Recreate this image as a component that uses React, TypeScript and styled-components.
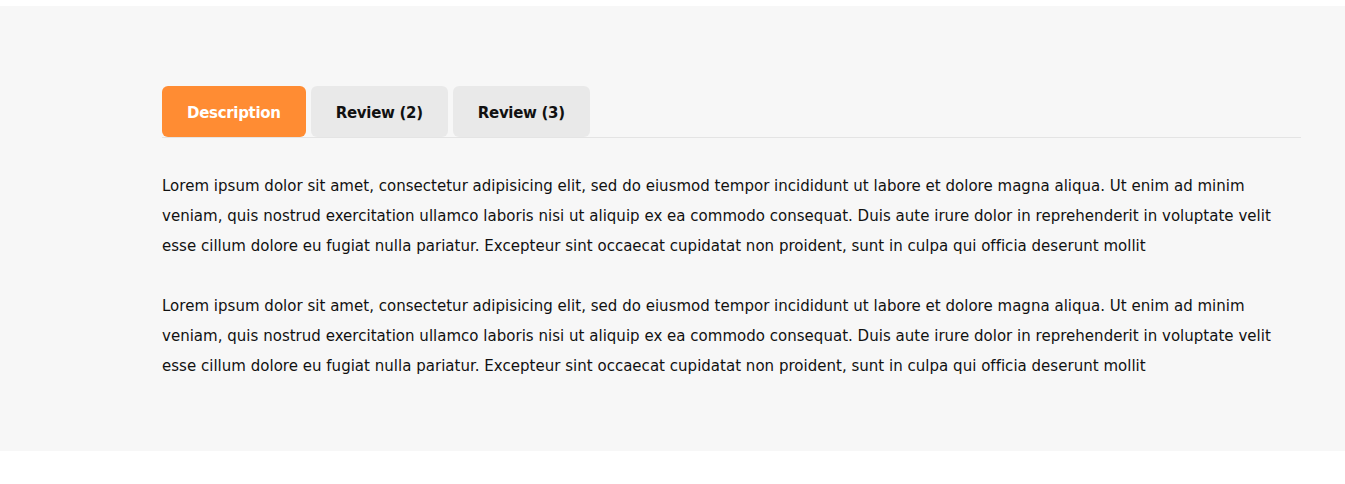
import React, { useState } from "react";
import styled, { createGlobalStyle } from "styled-components";

const Global = createGlobalStyle`
  html, body { margin: 0; padding: 0; background: #ffffff; }
  body { font-family: "DejaVu Sans", "Liberation Sans", sans-serif; }
  * { box-sizing: border-box; }
`;

const Page = styled.div`
  padding-top: 6px;
  height: 484px;
`;

const Section = styled.section`
  background: #f7f7f7;
  padding: 80px 44px 70px 162px;
`;

const TabList = styled.div`
  display: flex;
  gap: 5px;
  border-bottom: 1px solid #e4e4e4;
`;

const Tab = styled.button<{ $active?: boolean }>`
  height: 51px;
  padding: 2px 25px 0;
  border: none;
  border-radius: 6px;
  background: ${(p) => (p.$active ? "#ff8c33" : "#e9e9e9")};
  color: ${(p) => (p.$active ? "#ffffff" : "#111111")};
  font-family: inherit;
  font-size: 15px;
  font-weight: 700;
  letter-spacing: -0.3px;
  cursor: pointer;
`;

const Content = styled.div`
  padding-top: 33px;
`;

const Para = styled.p`
  margin: 0 0 30px;
  font-size: 15px;
  line-height: 30px;
  letter-spacing: 0.02px;
  color: #111111;
  &:last-child { margin-bottom: 0; }
`;

const text =
  "Lorem ipsum dolor sit amet, consectetur adipisicing elit, sed do eiusmod tempor incididunt ut labore et dolore magna aliqua. Ut enim ad minim veniam, quis nostrud exercitation ullamco laboris nisi ut aliquip ex ea commodo consequat. Duis aute irure dolor in reprehenderit in voluptate velit esse cillum dolore eu fugiat nulla pariatur. Excepteur sint occaecat cupidatat non proident, sunt in culpa qui officia deserunt mollit";

export default function App() {
  const [active, setActive] = useState(0);
  const tabs = ["Description", "Review (2)", "Review (3)"];
  return (
    <Page>
      <Global />
      <Section>
        <TabList>
          {tabs.map((t, i) => (
            <Tab key={t} $active={i === active} onClick={() => setActive(i)}>
              {t}
            </Tab>
          ))}
        </TabList>
        <Content>
          <Para>{text}</Para>
          <Para>{text}</Para>
        </Content>
      </Section>
    </Page>
  );
}
